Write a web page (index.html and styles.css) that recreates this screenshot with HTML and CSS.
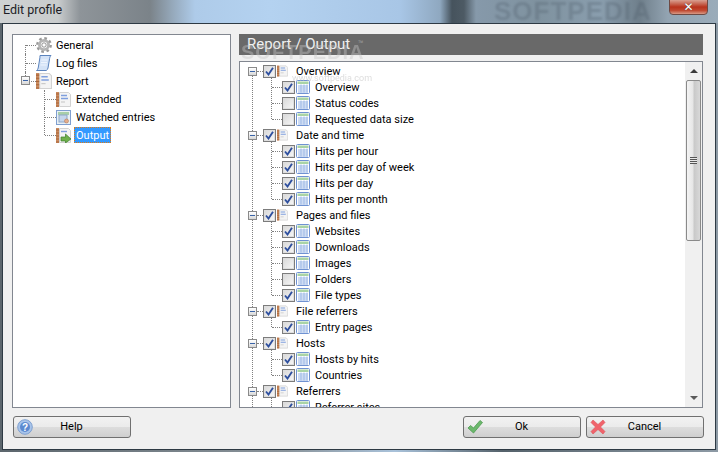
FILE: index.html
```html
<!DOCTYPE html>
<html lang="en">
<head>
<meta charset="utf-8">
<title>Edit profile</title>
<link rel="stylesheet" href="styles.css">
</head>
<body>
<svg class="defs" width="0" height="0" aria-hidden="true">
  <symbol id="i-gear" viewBox="0 0 16 16">
    <circle cx="8" cy="8" r="6.6" fill="none" stroke="#9a9a9a" stroke-width="2.6" stroke-dasharray="2.6 2.6"/>
    <circle cx="8" cy="8" r="4.6" fill="none" stroke="#b4b4b4" stroke-width="2.8"/>
    <circle cx="8" cy="8" r="2.2" fill="#fff" stroke="#777" stroke-width=".8"/>
  </symbol>
  <symbol id="i-scroll" viewBox="0 0 16 16">
    <path d="M4 .5h11c-1 1-1.200 2-1.400 3l-1.600 9.500c-.2 1-.8 2-1.700 2.500H.5c1-.6 1.500-1.500 1.700-2.500L3.700 4c.2-1 .3-2.500.3-3.500z" fill="#d4e3f7" stroke="#5b83bd"/>
    <path d="M5.500 5h6M5 7.500h6M4.500 10h6" stroke="#eef4fd"/>
  </symbol>
  <symbol id="i-note" viewBox="0 0 15 15">
    <path d="M3.500.5h9l2 2v12h-11z" fill="#f4f4f4" stroke="#d2d2d2"/>
    <rect x="0" y="0" width="3" height="15" fill="#c98a5e"/>
    <path d="M0 2h3M0 5h3M0 8h3M0 11h3M0 14h3" stroke="#a9653a"/>
    <path d="M5 3.500h6M5 6.500h7" stroke="#7f9fde" stroke-width="1.400"/>
    <path d="M5 10h4" stroke="#c4c4c4"/>
  </symbol>
  <symbol id="i-watch" viewBox="0 0 15 15">
    <rect x=".5" y=".5" width="14" height="14" fill="#e8f0f4" stroke="#7f9fd0"/>
    <rect x="2" y="2" width="11" height="3" fill="#a8cfa8"/>
    <rect x="3" y="5" width="8" height="7" fill="#c5d6ec" stroke="#8fa8c8"/>
    <circle cx="10.500" cy="11" r="2" fill="#e6b08c" stroke="#b5785a" stroke-width=".6"/>
  </symbol>
  <symbol id="i-output" viewBox="0 0 15 15">
    <path d="M3.500.5h9l2 2v12h-11z" fill="#f4f4f4" stroke="#d2d2d2"/>
    <rect x="0" y="0" width="3" height="15" fill="#c98a5e"/>
    <path d="M0 2h3M0 5h3M0 8h3M0 11h3M0 14h3" stroke="#a9653a"/>
    <path d="M5 3.500h6" stroke="#7f9fde" stroke-width="1.400"/>
    <path d="M5 9h4.500V6L15 11l-5.500 4v-2H5z" fill="#6fb04c" stroke="#3e7f2c" stroke-width=".7"/>
  </symbol>
  <symbol id="i-table" viewBox="0 0 14 14">
    <rect x=".5" y=".5" width="13" height="13" rx="1" fill="#fff" stroke="#6f92d2"/>
    <rect x="1.500" y="1.500" width="11" height="2.500" fill="#a9d4a5"/>
    <path d="M2 6h10M2 8h10M2 10h10M2 12h10M5 4.500v8M8 4.500v8M11 4.500v8" stroke="#9db9e6"/>
  </symbol>
  <symbol id="i-check" viewBox="0 0 9 9">
    <path d="M1 4.500l2.500 3L8 .8" fill="none" stroke="#2e4f9e" stroke-width="1.900"/>
  </symbol>
</svg>

<header class="titlebar">
  <span class="title">Edit profile</span>
  <span class="wm-title">SOFTPEDIA</span>
  <span class="close"><span class="close-x">✕</span></span>
</header>

<div class="frame">
  <main class="panels">
    <nav class="panel nav">
      <ul class="nav-list">
        <li class="nav-row nav-top nav-first"><svg class="ni"><use href="#i-gear"/></svg><span class="lab">General</span></li>
        <li class="nav-row nav-top"><svg class="ni"><use href="#i-scroll"/></svg><span class="lab">Log files</span></li>
        <li class="nav-row nav-top nav-last"><span class="exp"></span><svg class="ni"><use href="#i-note"/></svg><span class="lab">Report</span></li>
        <li class="nav-row nav-sub"><svg class="ni"><use href="#i-note"/></svg><span class="lab">Extended</span></li>
        <li class="nav-row nav-sub"><svg class="ni"><use href="#i-watch"/></svg><span class="lab">Watched entries</span></li>
        <li class="nav-row nav-sub nav-sub-last"><svg class="ni"><use href="#i-output"/></svg><span class="lab sel">Output</span></li>
      </ul>
    </nav>

    <section class="right">
      <h2 class="heading">Report / Output</h2>
      <div class="panel report">
        <ul class="tree">
          <li class="grp"><div class="row"><span class="exp"></span><span class="cb on"><svg><use href="#i-check"/></svg></span><svg class="gi"><use href="#i-note"/></svg><span class="txt">Overview</span></div>
            <ul>
              <li class="row kid"><span class="cb on"><svg><use href="#i-check"/></svg></span><svg class="ti"><use href="#i-table"/></svg><span class="txt">Overview</span></li>
              <li class="row kid"><span class="cb"></span><svg class="ti"><use href="#i-table"/></svg><span class="txt">Status codes</span></li>
              <li class="row kid"><span class="cb"></span><svg class="ti"><use href="#i-table"/></svg><span class="txt">Requested data size</span></li>
            </ul></li>
          <li class="grp"><div class="row"><span class="exp"></span><span class="cb on"><svg><use href="#i-check"/></svg></span><svg class="gi"><use href="#i-note"/></svg><span class="txt">Date and time</span></div>
            <ul>
              <li class="row kid"><span class="cb on"><svg><use href="#i-check"/></svg></span><svg class="ti"><use href="#i-table"/></svg><span class="txt">Hits per hour</span></li>
              <li class="row kid"><span class="cb on"><svg><use href="#i-check"/></svg></span><svg class="ti"><use href="#i-table"/></svg><span class="txt">Hits per day of week</span></li>
              <li class="row kid"><span class="cb on"><svg><use href="#i-check"/></svg></span><svg class="ti"><use href="#i-table"/></svg><span class="txt">Hits per day</span></li>
              <li class="row kid"><span class="cb on"><svg><use href="#i-check"/></svg></span><svg class="ti"><use href="#i-table"/></svg><span class="txt">Hits per month</span></li>
            </ul></li>
          <li class="grp"><div class="row"><span class="exp"></span><span class="cb on"><svg><use href="#i-check"/></svg></span><svg class="gi"><use href="#i-note"/></svg><span class="txt">Pages and files</span></div>
            <ul>
              <li class="row kid"><span class="cb on"><svg><use href="#i-check"/></svg></span><svg class="ti"><use href="#i-table"/></svg><span class="txt">Websites</span></li>
              <li class="row kid"><span class="cb on"><svg><use href="#i-check"/></svg></span><svg class="ti"><use href="#i-table"/></svg><span class="txt">Downloads</span></li>
              <li class="row kid"><span class="cb"></span><svg class="ti"><use href="#i-table"/></svg><span class="txt">Images</span></li>
              <li class="row kid"><span class="cb"></span><svg class="ti"><use href="#i-table"/></svg><span class="txt">Folders</span></li>
              <li class="row kid"><span class="cb on"><svg><use href="#i-check"/></svg></span><svg class="ti"><use href="#i-table"/></svg><span class="txt">File types</span></li>
            </ul></li>
          <li class="grp"><div class="row"><span class="exp"></span><span class="cb on"><svg><use href="#i-check"/></svg></span><svg class="gi"><use href="#i-note"/></svg><span class="txt">File referrers</span></div>
            <ul>
              <li class="row kid"><span class="cb on"><svg><use href="#i-check"/></svg></span><svg class="ti"><use href="#i-table"/></svg><span class="txt">Entry pages</span></li>
            </ul></li>
          <li class="grp"><div class="row"><span class="exp"></span><span class="cb on"><svg><use href="#i-check"/></svg></span><svg class="gi"><use href="#i-note"/></svg><span class="txt">Hosts</span></div>
            <ul>
              <li class="row kid"><span class="cb on"><svg><use href="#i-check"/></svg></span><svg class="ti"><use href="#i-table"/></svg><span class="txt">Hosts by hits</span></li>
              <li class="row kid"><span class="cb on"><svg><use href="#i-check"/></svg></span><svg class="ti"><use href="#i-table"/></svg><span class="txt">Countries</span></li>
            </ul></li>
          <li class="grp"><div class="row"><span class="exp"></span><span class="cb on"><svg><use href="#i-check"/></svg></span><svg class="gi"><use href="#i-note"/></svg><span class="txt">Referrers</span></div>
            <ul>
              <li class="row kid"><span class="cb on"><svg><use href="#i-check"/></svg></span><svg class="ti"><use href="#i-table"/></svg><span class="txt">Referrer sites</span></li>
            </ul></li>
        </ul>
        <div class="scrollbar">
          <span class="sb-btn"><span class="arrow-up"></span></span>
          <span class="thumb"><span class="grip"></span></span>
          <span class="sb-rest"></span>
          <span class="sb-btn"><span class="arrow-down"></span></span>
        </div>
      </div>
      <span class="wm-head">SOFTPEDIA</span>
      <span class="wm-tm">™</span>
      <span class="wm-url">www.softpedia.com</span>
    </section>
  </main>

  <footer class="footer">
    <button class="btn" type="button">
      <svg class="bi" viewBox="0 0 16 16"><circle cx="8" cy="8" r="7.300" fill="#a8c4ea" stroke="#7fa0d0"/><circle cx="8" cy="8" r="5" fill="#5c8ad0"/><text class="qm" x="8" y="11.500" text-anchor="middle">?</text></svg>
      <span>Help</span>
    </button>
    <span class="spacer"></span>
    <button class="btn" type="button">
      <svg class="bi" viewBox="0 0 16 16"><path d="M1 9l2.500-2.500L6.500 9 13 1.500l2.500 2L6.500 14z" fill="#6cb86c" stroke="#4e9a52" stroke-width=".8"/></svg>
      <span>Ok</span>
    </button>
    <button class="btn" type="button">
      <svg class="bi" viewBox="0 0 16 16"><path d="M3 1l5 4.500L13 1l2 2.500L10.500 8l4.500 4.500-2 2.500-5-4.500L3 15l-2-2.500L5.500 8 1 3.500z" fill="#f0636b" stroke="#dc5058" stroke-width=".6"/></svg>
      <span>Cancel</span>
    </button>
  </footer>
</div>
</body>
</html>
```

FILE: styles.css
```css
* { box-sizing: border-box; }
html, body { margin: 0; padding: 0; }
body {
  width: 718px;
  height: 452px;
  overflow: hidden;
  display: flex;
  flex-direction: column;
  font: 11px/16px Roboto, sans-serif;
  color: #000;
  background: linear-gradient(90deg, #5c666d 0, #8a949b 40%, #a9c2da 55%, #55626b 70%, #8d9aa5 100%);
}
ul { list-style: none; margin: 0; padding: 0; }
.defs { position: absolute; }

/* title bar */
.titlebar {
  position: relative;
  flex: 0 0 23px;
  padding: 2px 0 0 3px;
  overflow: hidden;
  background:
    linear-gradient(90deg, #cfd2d3 0, #c9cccd 58px, #8e9499 80px, #7b8389 150px, #95a8ba 172px, #aecbe9 195px, #b4d2f0 270px, #a8c6e6 400px, #8fa8c0 440px, #46535d 452px, #4d5a64 464px, #8699aa 476px, #7f929f 540px, #8a9eae 600px, #6f7f8b 640px, #93a4b2 668px, #9bacba 718px);
}
.title { font-size: 12.5px; line-height: 16px; color: #1d1d26; }
.wm-title {
  position: absolute;
  left: 494px;
  top: -4px;
  font: bold 26px/30px "Liberation Sans", sans-serif;
  letter-spacing: 1px;
  color: #4c5a68;
  opacity: .3;
  filter: blur(1px);
}
.close {
  position: absolute;
  left: 669px;
  top: -1px;
  width: 39px;
  height: 16px;
  display: flex;
  align-items: center;
  justify-content: center;
  border: 1px solid #6e4a44;
  border-radius: 0 0 4px 4px;
  background: linear-gradient(#d9a091 0, #c5604c 30%, #b8321c 50%, #c14a32 75%, #d89a86 100%);
}
.close-x { color: #fff; font: bold 12px/12px "DejaVu Sans", sans-serif; text-shadow: 0 0 1px #333; }

/* frame */
.frame {
  flex: 1;
  margin: 0 2px 2px;
  border: 1px solid #2e3a44;
  background: #f0f0f0;
  padding: 10px 12px 0 9px;
  display: flex;
  flex-direction: column;
}
.panels {
  display: grid;
  grid-template-columns: 219px 464px;
  grid-template-rows: 374px;
  gap: 8px;
  height: 374px;
}
.panel {
  border: 1px solid #828790;
  background: #fff;
  overflow: hidden;
}

/* left navigation tree */
.nav-list { padding-top: 1px; }
.nav-row {
  position: relative;
  height: 18px;
  display: flex;
  align-items: center;
}
.nav-top { padding-left: 23px; }
.nav-sub { padding-left: 43px; }
.nav-top::before {
  content: "";
  position: absolute;
  left: 12px;
  top: 0;
  height: 18px;
  border-left: 1px dotted #808080;
}
.nav-first::before { top: 9px; height: 9px; }
.nav-last::before { height: 6px; }
.nav-top::after, .nav-sub::after {
  content: "";
  position: absolute;
  top: 9px;
  border-top: 1px dotted #808080;
}
.nav-top::after { left: 13px; width: 10px; }
.nav-sub::after { left: 32px; width: 11px; }
.nav-sub::before {
  content: "";
  position: absolute;
  left: 31px;
  top: 0;
  height: 18px;
  border-left: 1px dotted #808080;
}
.nav-sub-last::before { height: 9px; }
.nav-top .exp { position: absolute; left: 8px; top: 4px; z-index: 1; }
.ni { width: 16px; height: 16px; flex: none; position: relative; z-index: 1; background: #fff; }
.nav-sub .ni { width: 15px; height: 15px; }
.lab { margin-left: 1px; padding: 1px 2px 0; line-height: 13px; border: 1px solid transparent; }
.nav-sub .lab { margin-left: 3px; padding: 1px 1px 0; }
.sel { background: #3399ff; color: #fff; border: 1px dotted #e07b14; padding-right: 2px; }

/* expander */
.exp {
  flex: none;
  width: 9px;
  height: 9px;
  border: 1px solid #8a8a8a;
  background: linear-gradient(#fff, #d8d8d8);
  position: relative;
}
.exp::after {
  content: "";
  position: absolute;
  left: 1px;
  top: 3px;
  width: 5px;
  height: 1px;
  background: #3a64a8;
}

/* right side */
.right { position: relative; display: flex; flex-direction: column; gap: 6px; min-width: 0; min-height: 0; }
.heading {
  margin: 0;
  flex: none;
  height: 21px;
  padding-left: 8px;
  background: #696969;
  color: #f0f0f0;
  font: 400 15px/20px Roboto, sans-serif;
}
.report { flex: 1; display: flex; min-height: 0; }
.tree { flex: 1; padding-top: 1px; overflow: hidden; }
.grp { position: relative; }
.grp::before {
  content: "";
  position: absolute;
  left: 12px;
  top: 13px;
  bottom: -4px;
  border-left: 1px dotted #808080;
}
.row {
  position: relative;
  height: 16px;
  display: flex;
  align-items: center;
  padding-left: 8px;
}
.txt { margin-top: 2px; }
.row > .exp { margin-right: 6px; z-index: 1; }
.row > .exp::before {
  content: "";
  position: absolute;
  left: 8px;
  top: 3px;
  width: 6px;
  border-top: 1px dotted #808080;
}
.kid { padding-left: 42px; }
.kid::before {
  content: "";
  position: absolute;
  left: 31px;
  top: -1px;
  height: 17px;
  border-left: 1px dotted #808080;
}
.kid:last-child::before { height: 9px; }
.kid::after {
  content: "";
  position: absolute;
  left: 32px;
  top: 8px;
  width: 10px;
  border-top: 1px dotted #808080;
}
.cb {
  flex: none;
  width: 13px;
  height: 13px;
  border: 1px solid #7c7c7c;
  background: linear-gradient(135deg, #d8d8d8, #f8f8f8);
  outline: 1px solid #dedede;
  outline-offset: -2px;
  display: flex;
  align-items: center;
  justify-content: center;
}
.cb svg { width: 9px; height: 9px; }
.gi { flex: none; width: 11px; height: 14px; margin: 0 8px 0 1px; }
.ti { flex: none; width: 14px; height: 14px; margin: 0 5px 0 1px; }

/* scrollbar */
.scrollbar {
  flex: none;
  width: 17px;
  display: flex;
  flex-direction: column;
  background: #f0f0f0;
}
.sb-btn {
  flex: none;
  height: 18px;
  display: flex;
  align-items: center;
  justify-content: center;
}
.arrow-up, .arrow-down {
  width: 0;
  height: 0;
  border-left: 4px solid transparent;
  border-right: 4px solid transparent;
}
.arrow-up { border-bottom: 4px solid #3a3a3a; }
.arrow-down { border-top: 4px solid #5a5a5a; }
.thumb {
  flex: none;
  height: 161px;
  margin: 0 1px 0 1px;
  border: 1px solid #8a8a8a;
  border-radius: 2px;
  background: linear-gradient(90deg, #f4f4f4 0, #e6e6e6 45%, #c9c9c9 55%, #d8d8d8 100%);
  display: flex;
  align-items: center;
  justify-content: center;
}
.grip {
  width: 7px;
  height: 7px;
  background: repeating-linear-gradient(#555 0 1px, #e8e8e8 1px 2px);
}
.sb-rest { flex: 1; }

/* watermarks */
.wm-head {
  position: absolute;
  left: 2px;
  top: 7px;
  font: bold 20px/22px "Liberation Sans", sans-serif;
  letter-spacing: 1px;
  color: #c8c8c8;
  opacity: .4;
}
.wm-tm { position: absolute; left: 119px; top: 2px; font-size: 9px; color: #9a9a9a; }
.wm-url { position: absolute; left: 53px; top: 38px; font-size: 9px; line-height: 12px; color: #bbb; opacity: .5; }

/* buttons */
.footer {
  display: flex;
  gap: 5px;
  margin: 8px -1px 0 1px;
}
.spacer { flex: 1; }
.btn {
  width: 118px;
  height: 22px;
  padding: 0 0 0 3px;
  border: 1px solid #707070;
  border-radius: 3px;
  background: linear-gradient(#f2f2f2 0, #ebebeb 50%, #dddddd 50%, #cfcfcf 100%);
  display: grid;
  grid-template-columns: 1fr auto 1fr;
  align-items: center;
  font: 11px/16px Roboto, sans-serif;
  color: #000;
}
.btn span { padding-right: 4px; }
.bi { width: 16px; height: 16px; }
.qm { font: bold 10px "Liberation Sans", sans-serif; fill: #fff; }
```
